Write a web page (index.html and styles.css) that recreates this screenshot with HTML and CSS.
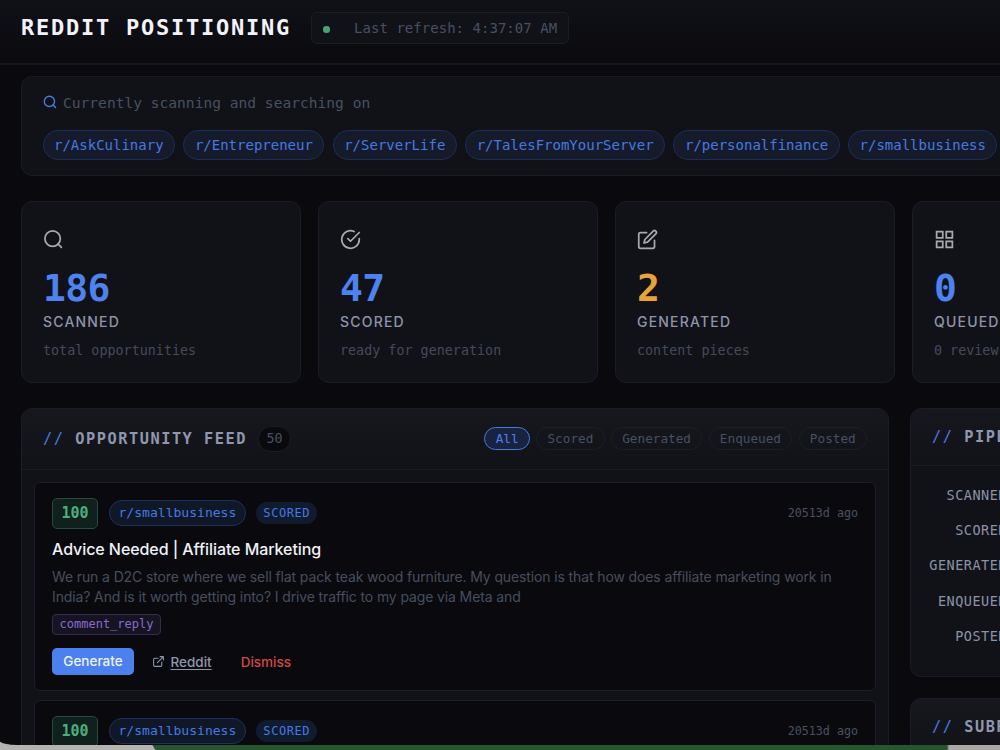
FILE: index.html
```html
<!DOCTYPE html>
<html lang="en">
<head>
<meta charset="utf-8">
<title>Reddit Positioning</title>
<link rel="stylesheet" href="styles.css">
</head>
<body>
<div class="window">
  <header class="topbar">
    <h1>REDDIT POSITIONING</h1>
    <div class="refresh"><i class="dot"></i><span>Last refresh: 4:37:07 AM</span></div>
  </header>
  <main class="content">
    <section class="scan">
      <div class="scan-label">
        <svg width="14" height="14" viewBox="0 0 24 24"><circle cx="11" cy="11" r="8.8"/><path d="m21.5 21.5-4.2-4.2"/></svg>
        <span>Currently scanning and searching on</span>
      </div>
      <div class="pills">
        <span class="pill">r/AskCulinary</span><span class="pill">r/Entrepreneur</span><span class="pill">r/ServerLife</span><span class="pill">r/TalesFromYourServer</span><span class="pill">r/personalfinance</span><span class="pill">r/smallbusiness</span>
      </div>
    </section>
    <section class="stats">
      <article class="stat">
        <svg viewBox="0 0 24 24"><circle cx="11" cy="11" r="8.8"/><path d="m21 21-3.9-3.9"/></svg>
        <strong>186</strong><h2>SCANNED</h2><p>total opportunities</p>
      </article>
      <article class="stat">
        <svg viewBox="0 0 24 24"><path d="M22 11.1V12a10 10 0 1 1-5.9-9.1"/><path d="M22 4 12 14l-3-3"/></svg>
        <strong>47</strong><h2>SCORED</h2><p>ready for generation</p>
      </article>
      <article class="stat">
        <svg viewBox="0 0 24 24"><path d="M11 4H4a2 2 0 0 0-2 2v14a2 2 0 0 0 2 2h14a2 2 0 0 0 2-2v-7"/><path d="M18.5 2.5a2.1 2.1 0 0 1 3 3L12 15l-4 1 1-4z"/></svg>
        <strong class="amber">2</strong><h2>GENERATED</h2><p>content pieces</p>
      </article>
      <article class="stat">
        <svg class="square" viewBox="0 0 24 24"><path d="M3 3h7v7H3zM14 3h7v7h-7zM14 14h7v7h-7zM3 14h7v7H3z"/></svg>
        <strong>0</strong><h2>QUEUED</h2><p>0 review</p>
      </article>
    </section>
    <section class="columns">
      <div class="panel feed">
        <div class="panel-head feed-head">
          <h3><b>//</b> OPPORTUNITY FEED</h3><span class="count">50</span>
          <nav class="tabs"><span class="tab active">All</span><span class="tab">Scored</span><span class="tab">Generated</span><span class="tab">Enqueued</span><span class="tab">Posted</span></nav>
        </div>
        <div class="items">
          <article class="item">
            <div class="meta"><span class="score">100</span><span class="sub">r/smallbusiness</span><span class="status">SCORED</span><time>20513d ago</time></div>
            <h4>Advice Needed | Affiliate Marketing</h4>
            <p>We run a D2C store where we sell flat pack teak wood furniture. My question is that how does affiliate marketing work in<br>India? And is it worth getting into? I drive traffic to my page via Meta and</p>
            <span class="kind">comment_reply</span>
            <div class="actions">
              <span class="generate">Generate</span>
              <span class="reddit"><svg width="13" height="13" viewBox="0 0 24 24"><path d="M18 13v6a2 2 0 0 1-2 2H5a2 2 0 0 1-2-2V8a2 2 0 0 1 2-2h6M15 3h6v6M10 14 21 3"/></svg><u>Reddit</u></span>
              <span class="dismiss">Dismiss</span>
            </div>
          </article>
          <article class="item">
            <div class="meta"><span class="score">100</span><span class="sub">r/smallbusiness</span><span class="status">SCORED</span><time>20513d ago</time></div>
          </article>
        </div>
      </div>
      <aside class="side">
        <div class="panel pipeline">
          <div class="panel-head side-head"><h3><b>//</b> PIPELINE</h3></div>
          <div class="stages"><span>SCANNED</span><span>SCORED</span><span>GENERATED</span><span>ENQUEUED</span><span>POSTED</span></div>
        </div>
        <div class="panel subs">
          <div class="panel-head side-head"><h3><b>//</b> SUBREDDITS</h3></div>
        </div>
      </aside>
    </section>
  </main>
</div>
</body>
</html>
```
FILE: styles.css
```css
* { box-sizing: border-box; }
body {
  margin: 0; width: 1000px; height: 750px; overflow: hidden;
  font-family: Inter, "Liberation Sans", sans-serif;
  background: linear-gradient(60deg, #b5b3b2 0 134px, #26552f 135px) 0 100% / 160px 8px no-repeat,
    linear-gradient(90deg, #26552f 0 947px, #aaa8a2 949px);
}
h1, h2, h3, h4, p { margin: 0; }
h1, h3, .refresh, .scan, .stat strong, .stat p, .count, .tab, .meta, .kind, .stages {
  font-family: "DejaVu Sans Mono", monospace;
}
svg { fill: none; stroke: currentColor; stroke-width: 2; stroke-linecap: round; stroke-linejoin: round; flex: none; }
.window { width: 1000px; height: 744.5px; overflow: hidden; background: #0a0a0e; border-bottom-left-radius: 18px 4px; }
.topbar {
  display: flex; align-items: center; gap: 20px; height: 65px; padding: 0 21px 7px;
  border-bottom: 2px solid #161721; background: linear-gradient(#101117, #0a0a0e);
}
h1 { font-size: 22px; line-height: 26px; letter-spacing: 1.76px; color: #f2f3fa; white-space: nowrap; }
.refresh {
  display: flex; align-items: center; flex: none; width: 258px; height: 32px; padding-left: 11px;
  border: 1px solid #1b1c29; border-radius: 6px; background: #111217;
  color: #475062; font-size: 14px; letter-spacing: 0.03px; white-space: nowrap;
}
.dot { flex: none; width: 6.5px; height: 6.5px; margin: 3px 24.5px 0 0; border-radius: 50%; background: #45a375; }
.content { width: 1195px; padding: 11px 0 0 21px; }
.scan { height: 100px; padding: 15px 20.5px 0; border: 1.5px solid #191a26; border-radius: 11px; background: #111217; }
.scan-label { display: flex; align-items: center; gap: 6.5px; height: 20px; color: #475062; font-size: 14.58px; }
.scan-label svg { color: #4a7ae0; stroke-width: 2.4; }
.pills { display: flex; gap: 8.3px; margin-top: 18px; }
.pill {
  height: 30px; padding: 0 10.5px; border: 1px solid #1e2d55; border-radius: 15px; background: #161b2c;
  color: #4679e1; font-size: 14px; line-height: 28px; white-space: nowrap;
}
.stats { display: grid; grid-template-columns: repeat(4, 280px); gap: 17px; margin-top: 24.5px; }
.stat { height: 182px; padding: 27px 21px 0; border: 1px solid #1b1b2a; border-radius: 11px; background: #111217; }
.stat svg { display: block; width: 21px; height: 21px; margin-left: -0.5px; color: #a9a9ad; }
.stat .square { stroke-linejoin: miter; }
.stat strong { display: block; margin-top: 19px; height: 39px; color: #4e82ef; font-size: 38px; line-height: 39px; letter-spacing: -0.6px; }
.stat .amber { color: #eba23a; }
.stat h2 { margin-top: 5px; font-size: 14px; line-height: 18px; font-weight: 500; letter-spacing: 1.2px; color: #8d95aa; }
.stat p { margin-top: 11px; font-size: 13.4px; line-height: 18px; color: #434b5b; white-space: nowrap; }
.columns { display: grid; grid-template-columns: 868px 285px; gap: 21px; margin-top: 25px; }
.panel { border: 1px solid #1b1b29; border-radius: 11px; background: #111217; overflow: hidden; }
.panel-head { display: flex; align-items: center; padding: 0 21px; background: linear-gradient(#17181d, #111217); border-bottom: 1.5px solid #1a1b28; }
h3 { color: #8f98ae; font-size: 15.3px; letter-spacing: 1.53px; white-space: nowrap; }
h3 b { color: #4679e1; font-weight: 400; }
.feed-head { height: 61px; }
.count { flex: none; width: 33px; height: 26px; margin-left: 11px; border: 1px solid #1b1b29; border-radius: 13px; background: #0a0a0e; color: #475062; font-size: 13.3px; line-height: 24px; text-align: center; }
.tabs { display: flex; flex: none; gap: 6.3px; margin-left: auto; }
.tab { height: 23px; padding: 0 10.3px; border: 1px solid #1d1d2c; border-radius: 12px; color: #475062; font-size: 12.7px; line-height: 21px; }
.active { border-color: #4679e1; background: #182340; color: #4d80ed; }
.items { display: flex; flex-direction: column; gap: 9px; padding: 12.5px 12px 0; }
.item { height: 209px; padding: 15px 17px; border: 1px solid #1c1c2b; border-radius: 6px; background: #0a0a0e; }
.meta { display: flex; align-items: center; height: 30px; }
.score { width: 46px; height: 31px; border: 1px solid #244d3d; border-radius: 5px; background: #10201d; color: #4baf7d; font-size: 15px; font-weight: 700; line-height: 29px; text-align: center; }
.sub { height: 26px; margin-left: 10.5px; padding: 0 9px; border: 1px solid #1d315a; border-radius: 13px; background: #101827; color: #4679e1; font-size: 13.05px; line-height: 24px; }
.status { height: 22px; margin-left: 10px; padding: 0 7px; border-radius: 11px; background: #111b2e; color: #4679e1; font-size: 12px; letter-spacing: 0.58px; line-height: 22px; }
.meta time { margin-left: auto; color: #475062; font-size: 11.7px; }
.item h4 { margin-top: 10px; color: #f0f1f7; font-size: 16px; font-weight: 500; line-height: 22px; letter-spacing: -0.07px; }
.item p { margin-top: 7px; color: #454e5f; font-size: 14px; line-height: 20px; letter-spacing: -0.122px; white-space: nowrap; }
.kind { display: block; width: 109px; height: 21px; margin-top: 7px; border: 1px solid #352b52; border-radius: 4px; background: #171421; color: #896bd0; font-size: 12px; line-height: 19px; text-align: center; }
.actions { display: flex; align-items: center; height: 27px; margin-top: 13px; font-size: 13.5px; font-weight: 500; }
.generate { width: 82px; height: 27px; border-radius: 5px; background: #4c80ed; color: #eef3ff; line-height: 27px; text-align: center; }
.reddit { display: flex; align-items: center; gap: 5.5px; margin-left: 18px; color: #8f98ab; }
.reddit u { text-underline-offset: 2px; }
.dismiss { margin-left: 29px; color: #cf4a47; }
.side { display: flex; flex-direction: column; gap: 21px; }
.side-head { height: 57px; }
.pipeline { height: 269px; }
.stages { display: flex; flex-direction: column; width: 96px; padding-top: 12.3px; color: #8b93a7; font-size: 13.5px; letter-spacing: 0.5px; line-height: 35.3px; text-align: right; }
.subs { height: 200px; }
```
